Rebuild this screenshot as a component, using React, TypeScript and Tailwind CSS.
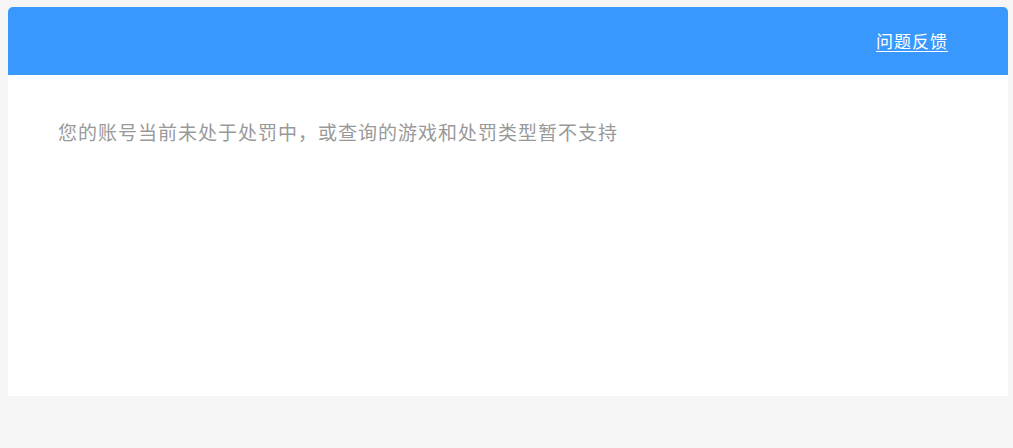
export default function App() {
  return (
    <div className="min-h-[448px] w-full bg-[#f5f5f5] pt-[7px] pl-[8px]" style={{ fontFamily: '"Microsoft YaHei", "Noto Sans CJK SC", sans-serif' }}>
      <div className="w-[1000px] h-[389px] bg-white rounded-t-[5px] overflow-hidden">
        <div className="h-[68px] bg-[#3898fd] flex items-center justify-end pr-[60px]">
          <a className="text-white text-[17px] tracking-[1px] underline underline-offset-[3px] leading-none cursor-pointer -mt-[1px]">问题反馈</a>
        </div>
        <div className="pl-[50px] pt-[45px] text-[#999999] text-[19px] tracking-[1px] leading-[24px]">
          您的账号当前未处于处罚中，或查询的游戏和处罚类型暂不支持
        </div>
      </div>
    </div>
  );
}
